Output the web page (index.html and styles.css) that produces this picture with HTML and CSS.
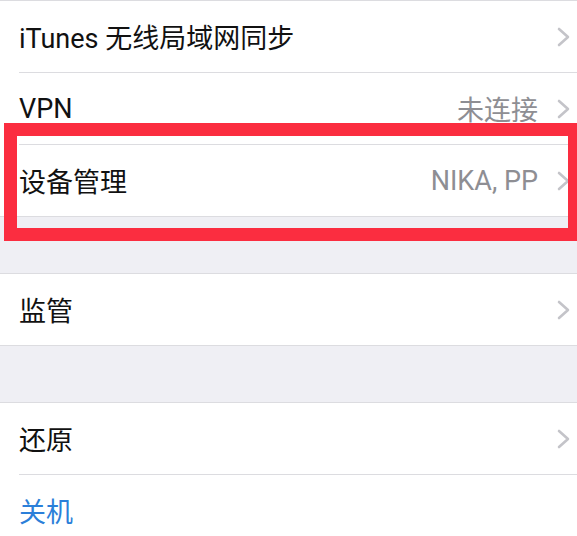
FILE: index.html
```html
<!DOCTYPE html>
<html>
<head>
    <meta charset="utf-8">
    <title>通用</title>
    <link rel="stylesheet" href="styles.css">
</head>
<body>
    <div class="group first">
        <div class="row">
            <div class="cell">
                <span class="title">iTunes 无线局域网同步</span>
                <svg class="chevron" width="14" height="20" viewBox="0 0 14 20"><polyline points="2,2 11,10 2,18"/></svg>
            </div>
        </div>
        <div class="row">
            <div class="cell">
                <span class="title">VPN</span>
                <span class="value">未连接</span>
                <svg class="chevron" width="14" height="20" viewBox="0 0 14 20"><polyline points="2,2 11,10 2,18"/></svg>
            </div>
        </div>
        <div class="row">
            <div class="cell">
                <span class="title">设备管理</span>
                <span class="value">NIKA, PP</span>
                <svg class="chevron" width="14" height="20" viewBox="0 0 14 20"><polyline points="2,2 11,10 2,18"/></svg>
            </div>
        </div>
    </div>

    <div class="group">
        <div class="row">
            <div class="cell">
                <span class="title">监管</span>
                <svg class="chevron" width="14" height="20" viewBox="0 0 14 20"><polyline points="2,2 11,10 2,18"/></svg>
            </div>
        </div>
    </div>

    <div class="group">
        <div class="row">
            <div class="cell">
                <span class="title">还原</span>
                <svg class="chevron" width="14" height="20" viewBox="0 0 14 20"><polyline points="2,2 11,10 2,18"/></svg>
            </div>
        </div>
        <div class="row">
            <div class="cell">
                <span class="title link">关机</span>
            </div>
        </div>
    </div>

    <div class="highlight"></div>
</body>
</html>
```

FILE: styles.css
```css
html, body{
    margin: 0;
    height: 100%;
    overflow: hidden;
}
body{
    position: relative;
    background: #efeff4;
    font-family: Roboto, "Noto Sans CJK SC", sans-serif;
    color: #111;
}
.group{
    background: #fff;
    border-top: 1px solid #dcdce0;
    border-bottom: 1px solid #dcdce0;
    margin-top: 56px;
}
.group.first{
    margin-top: 0;
}
.row{
    padding-left: 19px;
}
.cell{
    display: flex;
    align-items: center;
    height: 71px;
    padding-right: 6px;
    border-bottom: 1px solid #dcdce0;
}
.row:last-child .cell{
    border-bottom: none;
}
.title{
    flex: 1;
    font-size: 27px;
}
.title.link{
    color: #2b7fd9;
}
.value{
    font-size: 27px;
    color: #8e8e93;
    margin-right: 19px;
}
.chevron{
    fill: none;
    stroke: #c4c4c9;
    stroke-width: 2.6;
    stroke-linecap: round;
    stroke-linejoin: round;
}
.highlight{
    position: absolute;
    top: 123px;
    left: 4px;
    width: 577px;
    height: 118px;
    box-sizing: border-box;
    border: 13px solid #fb2d40;
}
```
